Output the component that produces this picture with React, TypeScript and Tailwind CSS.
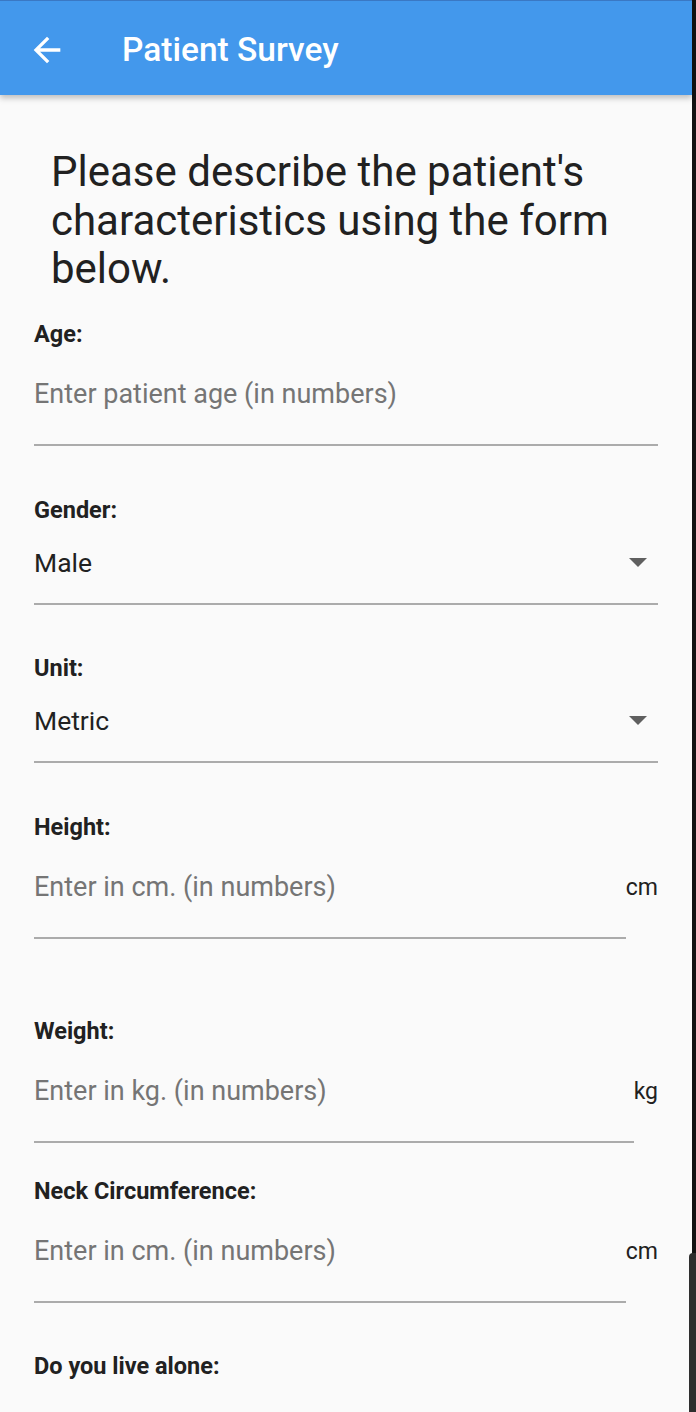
import React from "react";

const font = { fontFamily: "Roboto, 'Noto Sans', Arial, sans-serif" };

function Label({ text }: { text: string }) {
  return (
    <div className="text-[23.5px] leading-[26px] font-bold text-[#212121]">
      {text}
    </div>
  );
}

function TextField({
  label,
  placeholder,
  suffix,
}: {
  label: string;
  placeholder: string;
  suffix?: string;
}) {
  return (
    <div>
      <Label text={label} />
      <div className="flex items-center mt-[32px]">
        <div className="flex-1 pb-[35px] border-b-2 border-[#ababab]">
          <div className="text-[27px] leading-[30px] text-[#757575]">
            {placeholder}
          </div>
        </div>
        {suffix && (
          <div className="text-[23px] leading-[30px] text-[#212121] -mt-[35px]">
            {suffix}
          </div>
        )}
      </div>
    </div>
  );
}

function Dropdown({ label, value }: { label: string; value: string }) {
  return (
    <div>
      <Label text={label} />
      <div className="mt-[25px] pb-[25px] border-b-2 border-[#ababab] flex items-center justify-between">
        <div className="text-[26.5px] leading-[30px] text-[#212121]">{value}</div>
        <svg width="18" height="9" viewBox="0 0 18 9" className="mr-[11px]">
          <path d="M0 0h18L9 9z" fill="#5f5f5f" />
        </svg>
      </div>
    </div>
  );
}

export default function App() {
  return (
    <div className="relative flex h-[1412px] w-[696px] overflow-hidden bg-[#fafafa]" style={font}>
      <div className="flex-1 flex flex-col">
        {/* app bar */}
        <div className="h-[95px] shrink-0 bg-[#4398ec] border-t border-[#3a78c4] shadow-[0_3px_6px_rgba(0,0,0,0.25)] flex items-center pt-[3px] z-10">
          <svg width="40" height="40" viewBox="0 0 24 24" className="ml-[27px]">
            <path
              d="M20 11H7.83l5.59-5.59L12 4l-8 8 8 8 1.41-1.41L7.83 13H20v-2z"
              fill="#ffffff"
            />
          </svg>
          <div className="ml-[55px] text-[33.5px] font-medium text-white leading-none">
            Patient Survey
          </div>
        </div>

        <div className="px-[34px]">
          <div className="pt-[53px] pl-[17px] text-[42px] leading-[48.5px] text-[#212121]">
            Please describe the patient's characteristics using the form below.
          </div>

          <div className="mt-[27px]">
            <TextField label="Age:" placeholder="Enter patient age (in numbers)" />
          </div>
          <div className="mt-[51px]">
            <Dropdown label="Gender:" value="Male" />
          </div>
          <div className="mt-[50px]">
            <Dropdown label="Unit:" value="Metric" />
          </div>
          <div className="mt-[51px]">
            <TextField label="Height:" placeholder="Enter in cm. (in numbers)" suffix="cm" />
          </div>
          <div className="mt-[79px]">
            <TextField label="Weight:" placeholder="Enter in kg. (in numbers)" suffix="kg" />
          </div>
          <div className="mt-[35px]">
            <TextField
              label="Neck Circumference:"
              placeholder="Enter in cm. (in numbers)"
              suffix="cm"
            />
          </div>
          <div className="mt-[50px]">
            <Label text="Do you live alone:" />
          </div>
        </div>
      </div>

      {/* window edge */}
      <div className="w-[4px] shrink-0 bg-[#121212]" />
      {/* scrollbar thumb */}
      <div className="absolute right-0 top-[1253px] bottom-0 w-[7px] bg-[#2e2e2e] rounded-tl-[4px]" />
    </div>
  );
}
